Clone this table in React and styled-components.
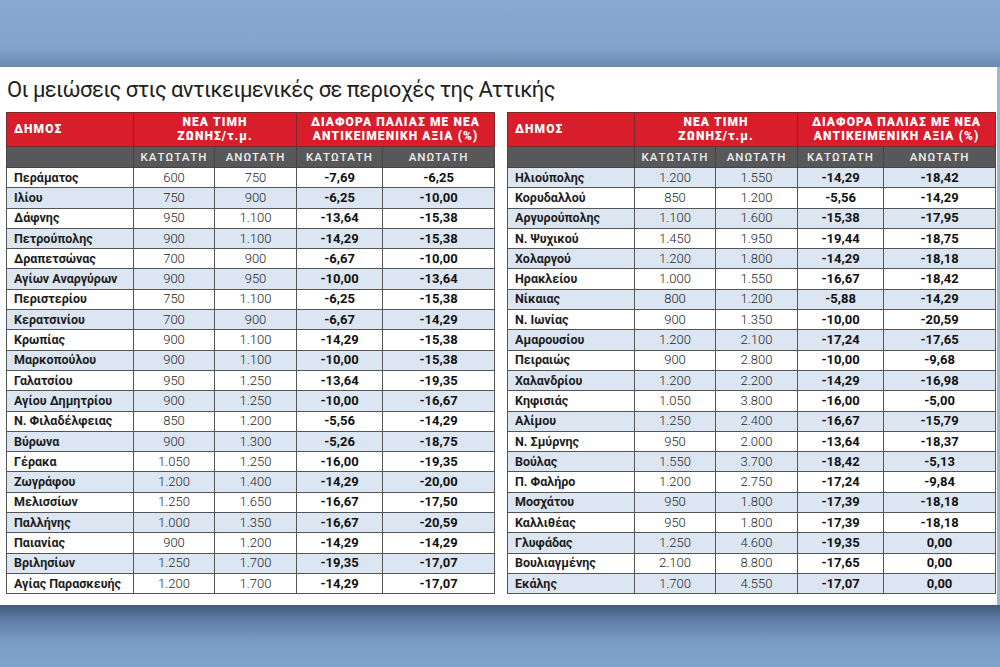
import styled, { createGlobalStyle } from 'styled-components';

const GlobalStyle = createGlobalStyle`
  html, body {
    margin: 0;
    padding: 0;
    background: #7fa2cc;
  }
  body {
    font-family: Roboto, "Noto Sans", sans-serif;
  }
`;

const left = [
  ["Περάματος", "600", "750", "-7,69", "-6,25"],
  ["Ιλίου", "750", "900", "-6,25", "-10,00"],
  ["Δάφνης", "950", "1.100", "-13,64", "-15,38"],
  ["Πετρούπολης", "900", "1.100", "-14,29", "-15,38"],
  ["Δραπετσώνας", "700", "900", "-6,67", "-10,00"],
  ["Αγίων Αναργύρων", "900", "950", "-10,00", "-13,64"],
  ["Περιστερίου", "750", "1.100", "-6,25", "-15,38"],
  ["Κερατσινίου", "700", "900", "-6,67", "-14,29"],
  ["Κρωπίας", "900", "1.100", "-14,29", "-15,38"],
  ["Μαρκοπούλου", "900", "1.100", "-10,00", "-15,38"],
  ["Γαλατσίου", "950", "1.250", "-13,64", "-19,35"],
  ["Αγίου Δημητρίου", "900", "1.250", "-10,00", "-16,67"],
  ["Ν. Φιλαδέλφειας", "850", "1.200", "-5,56", "-14,29"],
  ["Βύρωνα", "900", "1.300", "-5,26", "-18,75"],
  ["Γέρακα", "1.050", "1.250", "-16,00", "-19,35"],
  ["Ζωγράφου", "1.200", "1.400", "-14,29", "-20,00"],
  ["Μελισσίων", "1.250", "1.650", "-16,67", "-17,50"],
  ["Παλλήνης", "1.000", "1.350", "-16,67", "-20,59"],
  ["Παιανίας", "900", "1.200", "-14,29", "-14,29"],
  ["Βριλησίων", "1.250", "1.700", "-19,35", "-17,07"],
  ["Αγίας Παρασκευής", "1.200", "1.700", "-14,29", "-17,07"],
];

const right = [
  ["Ηλιούπολης", "1.200", "1.550", "-14,29", "-18,42"],
  ["Κορυδαλλού", "850", "1.200", "-5,56", "-14,29"],
  ["Αργυρούπολης", "1.100", "1.600", "-15,38", "-17,95"],
  ["Ν. Ψυχικού", "1.450", "1.950", "-19,44", "-18,75"],
  ["Χολαργού", "1.200", "1.800", "-14,29", "-18,18"],
  ["Ηρακλείου", "1.000", "1.550", "-16,67", "-18,42"],
  ["Νίκαιας", "800", "1.200", "-5,88", "-14,29"],
  ["Ν. Ιωνίας", "900", "1.350", "-10,00", "-20,59"],
  ["Αμαρουσίου", "1.200", "2.100", "-17,24", "-17,65"],
  ["Πειραιώς", "900", "2.800", "-10,00", "-9,68"],
  ["Χαλανδρίου", "1.200", "2.200", "-14,29", "-16,98"],
  ["Κηφισιάς", "1.050", "3.800", "-16,00", "-5,00"],
  ["Αλίμου", "1.250", "2.400", "-16,67", "-15,79"],
  ["Ν. Σμύρνης", "950", "2.000", "-13,64", "-18,37"],
  ["Βούλας", "1.550", "3.700", "-18,42", "-5,13"],
  ["Π. Φαλήρο", "1.200", "2.750", "-17,24", "-9,84"],
  ["Μοσχάτου", "950", "1.800", "-17,39", "-18,18"],
  ["Καλλιθέας", "950", "1.800", "-17,39", "-18,18"],
  ["Γλυφάδας", "1.250", "4.600", "-19,35", "0,00"],
  ["Βουλιαγμένης", "2.100", "8.800", "-17,65", "0,00"],
  ["Εκάλης", "1.700", "4.550", "-17,07", "0,00"],
];

function PriceTable({ rows, startBlue }) {
  return (
    <Table>
      <colgroup>
        <col style={{ width: 127 }} />
        <col style={{ width: 81 }} />
        <col style={{ width: 82 }} />
        <col style={{ width: 86 }} />
        <col style={{ width: 112 }} />
      </colgroup>
      <thead>
        <tr>
          <RedHead $align="left">ΔΗΜΟΣ</RedHead>
          <RedHead colSpan={2}>ΝΕΑ ΤΙΜΗ<br />ΖΩΝΗΣ/τ.μ.</RedHead>
          <RedHead colSpan={2}>ΔΙΑΦΟΡΑ ΠΑΛΙΑΣ ΜΕ ΝΕΑ<br />ΑΝΤΙΚΕΙΜΕΝΙΚΗ ΑΞΙΑ (%)</RedHead>
        </tr>
        <tr>
          <GrayHead />
          <GrayHead>ΚΑΤΩΤΑΤΗ</GrayHead>
          <GrayHead>ΑΝΩΤΑΤΗ</GrayHead>
          <GrayHead>ΚΑΤΩΤΑΤΗ</GrayHead>
          <GrayHead>ΑΝΩΤΑΤΗ</GrayHead>
        </tr>
      </thead>
      <tbody>
        {rows.map((r, i) => (
          <Row key={r[0]} $blue={(i % 2 === 1) !== startBlue}>
            <NameCell>{r[0]}</NameCell>
            <PriceCell>{r[1]}</PriceCell>
            <PriceCell>{r[2]}</PriceCell>
            <PctCell>{r[3]}</PctCell>
            <PctCell>{r[4]}</PctCell>
          </Row>
        ))}
      </tbody>
    </Table>
  );
}

export default function App() {
  return (
    <Page>
      <GlobalStyle />
      <TopBand />
      <Panel>
        <Title>Οι μειώσεις στις αντικειμενικές σε περιοχές της Αττικής</Title>
        <Tables>
          <PriceTable rows={left} startBlue={false} />
          <PriceTable rows={right} startBlue={true} />
        </Tables>
      </Panel>
      <BottomBand />
    </Page>
  );
}

const Page = styled.div`
  width: 1000px;
  height: 667px;
  display: flex;
  flex-direction: column;
  overflow: hidden;
`;

const TopBand = styled.div`
  height: 67px;
  flex: none;
  background: linear-gradient(to bottom, #88a9d1 0%, #82a4cc 70%, #6b89b1 100%);
`;

const BottomBand = styled.div`
  flex: 1;
  background: linear-gradient(to bottom, #425a7c 0%, #5f7ea6 25%, #7a9dc8 60%, #80a3cd 100%);
`;

const Panel = styled.div`
  height: 538px;
  flex: none;
  background: #ffffff;
  padding: 8px 7px 0 6px;
  box-sizing: border-box;
  border-right: 3px solid #9fb5d2;
`;

const Title = styled.h1`
  margin: 0 0 0 1px;
  font-family: Roboto, "Noto Sans", sans-serif;
  font-weight: 400;
  font-size: 22px;
  line-height: 30px;
  color: #231f20;
  letter-spacing: -0.6px;
`;

const Tables = styled.div`
  display: flex;
  gap: 12px;
  margin-top: 7px;
`;

const Table = styled.table`
  width: 488px;
  table-layout: fixed;
  border-collapse: collapse;
  border: 1px solid #5b5b5b;
  font-family: Roboto, "Noto Sans", sans-serif;
`;

const RedHead = styled.th`
  background: #d71e2a;
  color: #ffffff;
  height: 34px;
  padding: 0 ${p => (p.$align === 'left' ? '7px' : '2px')};
  text-align: ${p => p.$align || 'center'};
  font-size: 12px;
  font-weight: 900;
  letter-spacing: 1.1px;
  line-height: 13.5px;
  border: 1px solid #7a2a2e;
  box-sizing: border-box;
  white-space: nowrap;
`;

const GrayHead = styled.th`
  background: #58585a;
  color: #ececec;
  height: 20px;
  padding: 0;
  font-size: 11.5px;
  font-weight: 500;
  letter-spacing: 1px;
  border: 1px solid #444444;
`;

const Row = styled.tr`
  background: ${p => (p.$blue ? '#dce6f2' : '#ffffff')};
  height: 20.3px;
`;

const Cell = styled.td`
  border: 1px solid #555555;
  padding: 0;
  font-size: 13px;
  line-height: 18px;
  color: #1c1c1c;
  white-space: nowrap;
  overflow: hidden;
`;

const NameCell = styled(Cell)`
  text-align: left;
  font-size: 12.5px;
  font-weight: 700;
  padding-left: 7px;
  letter-spacing: 0;
`;

const PriceCell = styled(Cell)`
  text-align: center;
  font-weight: 300;
  color: #1e1e1e;
`;

const PctCell = styled(Cell)`
  text-align: center;
  font-weight: 700;
  color: #111111;
`;
